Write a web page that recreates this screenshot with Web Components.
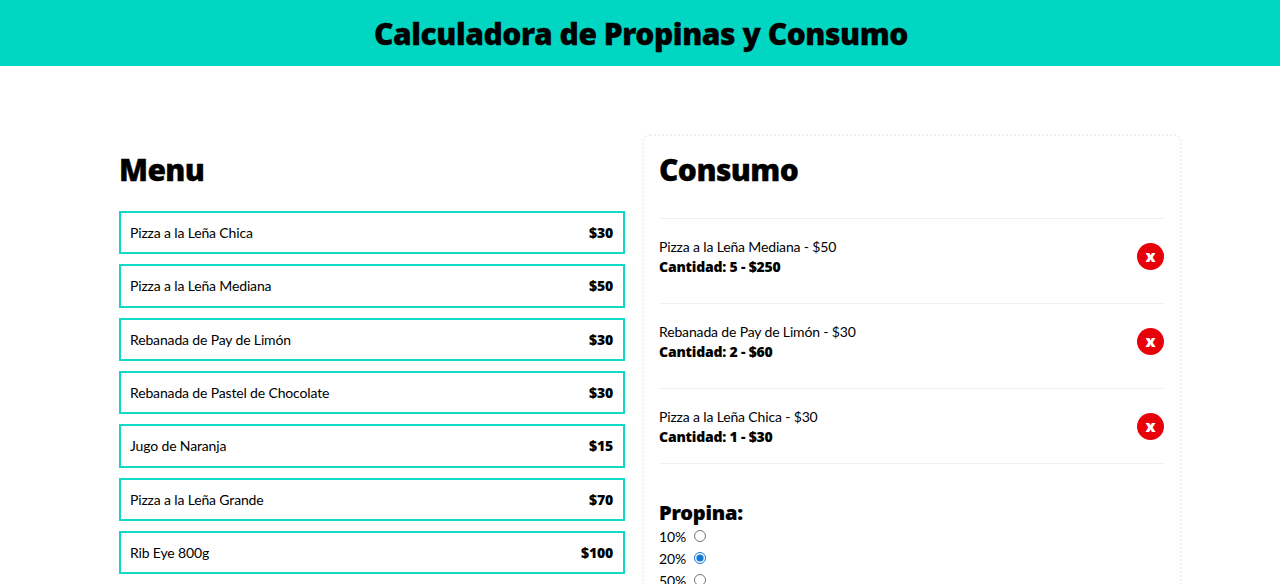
<!DOCTYPE html>
<html lang="es">
<head>
<meta charset="utf-8">
<title>Calculadora de Propinas y Consumo</title>
<style>
  html { overflow: hidden; }
  body { margin: 0; background: #fff; color: #000; font-family: Lato, "Noto Sans", sans-serif; font-size: 14px; letter-spacing: -0.15px; }
</style>
</head>
<body>
<tip-app>
  <menu-panel heading="Menu">
    <menu-item price="$30">Pizza a la Leña Chica</menu-item>
    <menu-item price="$50">Pizza a la Leña Mediana</menu-item>
    <menu-item price="$30">Rebanada de Pay de Limón</menu-item>
    <menu-item price="$30">Rebanada de Pastel de Chocolate</menu-item>
    <menu-item price="$15">Jugo de Naranja</menu-item>
    <menu-item price="$70">Pizza a la Leña Grande</menu-item>
    <menu-item price="$100">Rib Eye 800g</menu-item>
  </menu-panel>
  <order-panel heading="Consumo" slot="order">
    <order-row name="Pizza a la Leña Mediana - $50" qty="Cantidad: 5 - $250"></order-row>
    <order-row name="Rebanada de Pay de Limón - $30" qty="Cantidad: 2 - $60"></order-row>
    <order-row name="Pizza a la Leña Chica - $30" qty="Cantidad: 1 - $30"></order-row>
    <tip-form slot="tip">
      <tip-option>10%</tip-option>
      <tip-option checked>20%</tip-option>
      <tip-option>50%</tip-option>
    </tip-form>
  </order-panel>
</tip-app>

<script>
class TipApp extends HTMLElement {
  connectedCallback() {
    this.attachShadow({ mode: 'open' });
    this.shadowRoot.innerHTML = `
      <style>
        :host { display: block; }
        header { background: #00d6c1; height: 66px; display: flex; align-items: center; justify-content: center; padding: 2px 0 0 2px; box-sizing: border-box; }
        h1 { margin: 0; font: 900 30px/36px "Noto Sans", sans-serif; letter-spacing: -0.45px; -webkit-text-stroke: 0.3px #000; }
        main { display: grid; grid-template-columns: 506px 539px; gap: 17px; padding: 68px 99px 0 119px; align-items: start; }
      </style>
      <header><h1>Calculadora de Propinas y Consumo</h1></header>
      <main>
        <slot></slot>
        <slot name="order"></slot>
      </main>
    `;
  }
}

class MenuPanel extends HTMLElement {
  connectedCallback() {
    this.attachShadow({ mode: 'open' });
    this.shadowRoot.innerHTML = `
      <style>
        :host { display: block; padding-top: 18px; }
        h2 { margin: 0 0 23px; font: 900 30px/36px "Noto Sans", sans-serif; letter-spacing: -0.6px; -webkit-text-stroke: 0.3px #000; }
        .items { display: flex; flex-direction: column; gap: 10px; }
      </style>
      <h2>${this.getAttribute('heading')}</h2>
      <div class="items"><slot></slot></div>
    `;
  }
}

class MenuItem extends HTMLElement {
  connectedCallback() {
    this.attachShadow({ mode: 'open' });
    this.shadowRoot.innerHTML = `
      <style>
        :host { display: flex; justify-content: space-between; align-items: center; border: 2px solid #10d9c5; padding: 9px; line-height: 21.33px; }
        strong { font: 900 14px "Noto Sans", sans-serif; letter-spacing: -0.2px; margin-right: 1px; }
      </style>
      <span><slot></slot></span>
      <strong>${this.getAttribute('price')}</strong>
    `;
  }
}

class OrderPanel extends HTMLElement {
  connectedCallback() {
    this.attachShadow({ mode: 'open' });
    this.shadowRoot.innerHTML = `
      <style>
        :host { display: block; border: 2px dotted #edf0f6; border-radius: 8px; padding: 16px 16px 120px 15px; margin-right: -1px; }
        h2 { margin: 0 0 30px; font: 900 30px/36px "Noto Sans", sans-serif; letter-spacing: -0.6px; -webkit-text-stroke: 0.3px #000; }
        .rows { border-bottom: 1px solid #f0f1f3; margin-bottom: 37px; }
      </style>
      <h2>${this.getAttribute('heading')}</h2>
      <div class="rows"><slot></slot></div>
      <slot name="tip"></slot>
    `;
  }
}

class OrderRow extends HTMLElement {
  connectedCallback() {
    this.attachShadow({ mode: 'open' });
    this.shadowRoot.innerHTML = `
      <style>
        :host { display: flex; justify-content: space-between; align-items: center; border-top: 1px solid #f0f1f3; padding: 18px 0 16px; line-height: 20px; }
        :host(:not(:last-of-type)) { margin-bottom: 10px; }
        p { margin: 0; }
        strong { font: 900 14px/20px "Noto Sans", sans-serif; letter-spacing: -0.2px; }
        button { width: 27px; height: 27px; margin-top: -2px; padding: 0; border: 0; border-radius: 50%; background: #e8000b; color: #fff; font: 900 16px/25px "Noto Sans", sans-serif; letter-spacing: 0; }
      </style>
      <div>
        <p>${this.getAttribute('name')}</p>
        <p><strong>${this.getAttribute('qty')}</strong></p>
      </div>
      <button type="button">x</button>
    `;
  }
}

class TipForm extends HTMLElement {
  connectedCallback() {
    this.attachShadow({ mode: 'open' });
    this.shadowRoot.innerHTML = `
      <style>
        :host { display: block; }
        h3 { margin: 0; font: 900 20px/24px "Noto Sans", sans-serif; letter-spacing: -0.2px; -webkit-text-stroke: 0.2px #000; }
      </style>
      <h3>Propina:</h3>
      <slot></slot>
    `;
  }
}

class TipOption extends HTMLElement {
  connectedCallback() {
    this.attachShadow({ mode: 'open' });
    this.shadowRoot.innerHTML = `
      <style>
        :host { display: flex; align-items: center; height: 22px; }
        label { width: 35px; }
        input { margin: 0; width: 12px; height: 12px; accent-color: #1478d4; }
      </style>
      <label><slot></slot></label>
      <input type="radio" name="tip" ${this.hasAttribute('checked') ? 'checked' : ''}>
    `;
  }
}

customElements.define('tip-app', TipApp);
customElements.define('menu-panel', MenuPanel);
customElements.define('menu-item', MenuItem);
customElements.define('order-panel', OrderPanel);
customElements.define('order-row', OrderRow);
customElements.define('tip-form', TipForm);
customElements.define('tip-option', TipOption);
</script>
</body>
</html>
